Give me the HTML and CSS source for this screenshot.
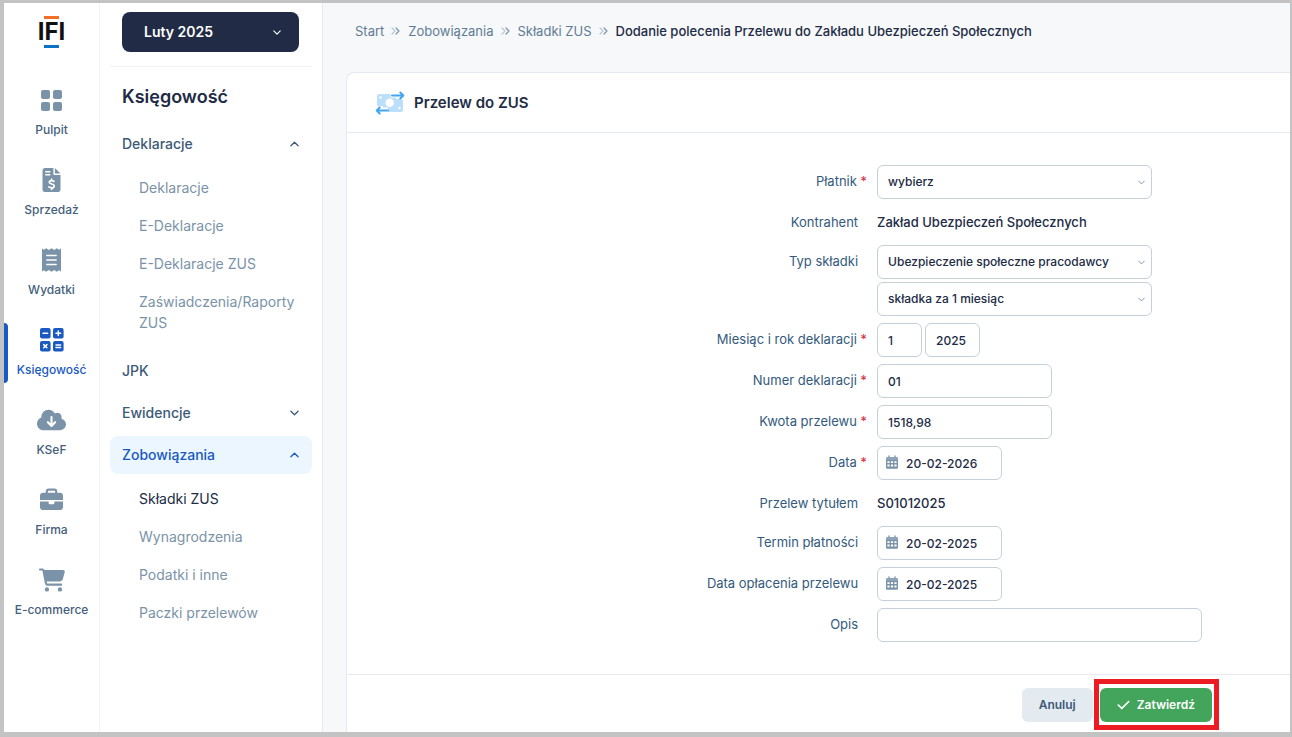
FILE: index.html
```html
<!DOCTYPE html>
<html lang="pl">
<head>
    <meta charset="UTF-8">
    <meta name="viewport" content="width=device-width, initial-scale=1.0">
    <title>Przelew do ZUS</title>
    <link rel="stylesheet" href="styles.css">
</head>
<body>
    <!-- shared icons -->
    <svg class="sprite" aria-hidden="true">
        <symbol id="chevron-down" viewBox="0 0 10 6">
            <path d="M1 1l4 4 4-4" fill="none" stroke="currentColor" stroke-width="1.4" stroke-linecap="round" stroke-linejoin="round"/>
        </symbol>
        <symbol id="chevron-up" viewBox="0 0 10 6">
            <path d="M1 5l4-4 4 4" fill="none" stroke="currentColor" stroke-width="1.4" stroke-linecap="round" stroke-linejoin="round"/>
        </symbol>
        <symbol id="double-right" viewBox="0 0 10 8">
            <path d="M1 1l3 3-3 3" fill="none" stroke="#b9c6d2" stroke-width="1.2" stroke-linecap="round" stroke-linejoin="round"/>
            <path d="M5 1l3 3-3 3" fill="none" stroke="#7b93a8" stroke-width="1.2" stroke-linecap="round" stroke-linejoin="round"/>
        </symbol>
        <symbol id="calendar" viewBox="0 0 12 14">
            <path d="M3 0.3a.8.8 0 0 1 .8.8V2h4.4v-.9a.8.8 0 0 1 1.6 0V2h.9A1.3 1.3 0 0 1 12 3.3V5H0V3.3A1.3 1.3 0 0 1 1.3 2h.9v-.9A.8.8 0 0 1 3 .3z" fill="#8ea3b5"/>
            <path fill="#7b93a8" fill-rule="evenodd" d="M0 5h12v7.4a1.3 1.3 0 0 1-1.3 1.3H1.3A1.3 1.3 0 0 1 0 12.4zM1.4 6.2v1.9h2.2V6.2zm3.5 0v1.9h2.2V6.2zm3.5 0v1.9h2.2V6.2zM1.4 9.6v2h2.2v-2zm3.5 0v2h2.2v-2zm3.5 0v2h2.2v-2z"/>
        </symbol>
    </svg>

    <nav class="rail" aria-label="Moduły">
        <a href="#" class="logo">IFI</a>
        <a href="#" class="rail-item">
            <svg width="23" height="24" viewBox="0 0 23 24" fill="currentColor">
                <rect x="1" y="2" width="9" height="9" rx="2"/>
                <rect x="13" y="2" width="9" height="9" rx="2"/>
                <rect x="1" y="14" width="9" height="9" rx="2"/>
                <rect x="13" y="14" width="9" height="9" rx="2"/>
            </svg>
            <span>Pulpit</span>
        </a>
        <a href="#" class="rail-item">
            <svg width="19" height="24" viewBox="0 0 384 512" fill="currentColor">
                <path d="M56 0C25 0 0 25 0 56v400c0 31 25 56 56 56h272c31 0 56-25 56-56V150H262c-17 0-30-13-30-30V0zM264 0v118h120z"/>
                <path d="M70 80h84M70 144h84" stroke="#fff" stroke-width="32" stroke-linecap="round"/>
                <path d="M246 284c-14-10-32-16-52-16-30 0-50 14-50 36 0 50 106 26 106 78 0 26-24 42-56 42-22 0-42-8-58-20M194 238v30M194 424v30" fill="none" stroke="#fff" stroke-width="36" stroke-linecap="round"/>
            </svg>
            <span>Sprzedaż</span>
        </a>
        <a href="#" class="rail-item">
            <svg width="19" height="24" viewBox="0 0 19 24" fill="currentColor">
                <path d="M0 .5l2 1.3L4.2.3l2.6 1.6L9.5.3l2.7 1.6L14.8.3 17 1.8l2-1.3v23l-2-1.3-2.2 1.5-2.6-1.6-2.7 1.6-2.7-1.6-2.6 1.6L2 22.2l-2 1.3z"/>
                <path d="M4.8 7.5h9.4M4.8 12h9.4M4.8 16.5h9.4" stroke="#fff" stroke-width="1.4" stroke-linecap="round"/>
            </svg>
            <span>Wydatki</span>
        </a>
        <a href="#" class="rail-item active">
            <svg width="24" height="24" viewBox="0 0 24 24" fill="currentColor">
                <rect width="10.6" height="10.4" rx="2"/>
                <rect x="13" width="10.6" height="10.4" rx="2"/>
                <rect y="13" width="10.6" height="10.4" rx="2"/>
                <rect x="13" y="13" width="10.6" height="10.4" rx="2"/>
                <path d="M3 5.2h4.6M16 5.2h4.6M18.3 2.9v4.6M3.7 16.6l3.2 3.2M6.9 16.6l-3.2 3.2M16 17h4.6M16 19.6h4.6" stroke="#fff" stroke-width="1.500" stroke-linecap="round"/>
            </svg>
            <span>Księgowość</span>
        </a>
        <a href="#" class="rail-item">
            <svg width="29" height="24" viewBox="0 0 640 512" fill="currentColor">
                <path d="M144 480C64.500 480 0 415.500 0 336c0-62.800 40.200-116.200 96.200-135.900c-.1-2.700-.2-5.400-.2-8.100c0-88.400 71.600-160 160-160c59.300 0 111 32.200 138.700 80.200C409.900 102 428.300 96 448 96c53 0 96 43 96 96c0 12.200-2.300 23.800-6.400 34.600C596 238.400 640 290.100 640 352c0 70.700-57.300 128-128 128H144z"/>
                <path d="M320 190v190M240 304l80 84 80-84" fill="none" stroke="#fff" stroke-width="46" stroke-linecap="round" stroke-linejoin="round"/>
            </svg>
            <span>KSeF</span>
        </a>
        <a href="#" class="rail-item">
            <svg width="23" height="24" viewBox="0 0 512 512" fill="currentColor">
                <path d="M184 48H328c4.400 0 8 3.600 8 8V96H176V56c0-4.400 3.600-8 8-8zm-56 8V96H64C28.700 96 0 124.700 0 160v96H192 320 512V160c0-35.300-28.700-64-64-64H384V56c0-30.900-25.100-56-56-56H184c-30.900 0-56 25.100-56 56zM512 288H320v32c0 17.700-14.300 32-32 32H224c-17.700 0-32-14.300-32-32V288H0V416c0 35.300 28.700 64 64 64H448c35.300 0 64-28.700 64-64V288z"/>
            </svg>
            <span>Firma</span>
        </a>
        <a href="#" class="rail-item">
            <svg width="26" height="24" viewBox="0 0 576 512" fill="currentColor">
                <path d="M0 24C0 10.700 10.700 0 24 0H69.500c22 0 41.500 12.800 50.600 32h411c26.300 0 45.500 25 38.600 50.400l-41 152.300c-8.500 31.400-37 53.300-69.500 53.300H170.700l5.400 28.500c2.200 11.300 12.100 19.500 23.600 19.500H488c13.300 0 24 10.700 24 24s-10.700 24-24 24H199.700c-34.600 0-64.300-24.600-70.700-58.500L77.400 54.500c-.7-3.800-4-6.500-7.900-6.500H24C10.700 48 0 37.300 0 24zM128 464a48 48 0 1 1 96 0 48 48 0 1 1 -96 0zm336-48a48 48 0 1 1 0 96 48 48 0 1 1 0-96z"/>
            </svg>
            <span>E-commerce</span>
        </a>
    </nav>

    <aside class="sidebar">
        <div class="period-box">
            <button type="button" class="period">
                <span>Luty 2025</span>
                <svg width="8" height="5"><use href="#chevron-down"/></svg>
            </button>
        </div>
        <h2>Księgowość</h2>
        <nav class="menu" aria-label="Księgowość">
            <a href="#" class="menu-item">Deklaracje <svg width="9" height="6"><use href="#chevron-up"/></svg></a>
            <ul class="submenu">
                <li><a href="#">Deklaracje</a></li>
                <li><a href="#">E-Deklaracje</a></li>
                <li><a href="#">E-Deklaracje ZUS</a></li>
                <li><a href="#">Zaświadczenia/Raporty ZUS</a></li>
            </ul>
            <a href="#" class="menu-item">JPK</a>
            <a href="#" class="menu-item">Ewidencje <svg width="9" height="6"><use href="#chevron-down"/></svg></a>
            <a href="#" class="menu-item active">Zobowiązania <svg width="9" height="6"><use href="#chevron-up"/></svg></a>
            <ul class="submenu">
                <li><a href="#" class="current">Składki ZUS</a></li>
                <li><a href="#">Wynagrodzenia</a></li>
                <li><a href="#">Podatki i inne</a></li>
                <li><a href="#">Paczki przelewów</a></li>
            </ul>
        </nav>
    </aside>

    <main class="main">
        <div class="breadcrumbs">
            <a href="#">Start</a>
            <svg width="10" height="8"><use href="#double-right"/></svg>
            <a href="#">Zobowiązania</a>
            <svg width="10" height="8"><use href="#double-right"/></svg>
            <a href="#">Składki ZUS</a>
            <svg width="10" height="8"><use href="#double-right"/></svg>
            <span class="here">Dodanie polecenia Przelewu do Zakładu Ubezpieczeń Społecznych</span>
        </div>

        <form class="card">
            <div class="card-header">
                <svg width="30" height="24" viewBox="0 0 30 24">
                    <path fill="#bbdefb" d="M4 3h11.500v3.500H21V8h3l1-.5 3 2V19a2 2 0 0 1-2 2H13v-4.500H8V15H5l-1 1-2-2V5a2 2 0 0 1 2-2z"/>
                    <circle cx="14.700" cy="11.800" r="4.300" fill="#fff"/>
                    <circle cx="5.500" cy="6.500" r="1.200" fill="#fff"/>
                    <circle cx="24.500" cy="17" r="1.200" fill="#fff"/>
                    <path d="M17 4.500h11M25.300 1.500l3 3-3 3M13 19.500H2M4.700 16.500l-3 3 3 3" fill="none" stroke="#42a5f5" stroke-width="2" stroke-linecap="round" stroke-linejoin="round"/>
                </svg>
                <h1>Przelew do ZUS</h1>
            </div>

            <div class="fields">
                <div class="row">
                    <label for="platnik" class="required">Płatnik</label>
                    <div class="control select">
                        <select id="platnik"><option>wybierz</option></select>
                        <svg width="7" height="5"><use href="#chevron-down"/></svg>
                    </div>
                </div>
                <div class="row static">
                    <span class="label">Kontrahent</span>
                    <span class="value">Zakład Ubezpieczeń Społecznych</span>
                </div>
                <div class="row">
                    <label for="typ">Typ składki</label>
                    <div class="stack">
                        <div class="control select">
                            <select id="typ"><option>Ubezpieczenie społeczne pracodawcy</option></select>
                            <svg width="7" height="5"><use href="#chevron-down"/></svg>
                        </div>
                        <div class="control select">
                            <select aria-label="Okres składki"><option>składka za 1 miesiąc</option></select>
                            <svg width="7" height="5"><use href="#chevron-down"/></svg>
                        </div>
                    </div>
                </div>
                <div class="row">
                    <label for="miesiac" class="required">Miesiąc i rok deklaracji</label>
                    <div class="pair">
                        <input type="text" id="miesiac" class="month" value="1">
                        <input type="text" class="year" aria-label="Rok deklaracji" value="2025">
                    </div>
                </div>
                <div class="row">
                    <label for="numer" class="required">Numer deklaracji</label>
                    <input type="text" id="numer" class="medium" value="01">
                </div>
                <div class="row">
                    <label for="kwota" class="required">Kwota przelewu</label>
                    <input type="text" id="kwota" class="medium" value="1518,98">
                </div>
                <div class="row">
                    <label for="data" class="required">Data</label>
                    <div class="control date">
                        <svg width="12" height="14"><use href="#calendar"/></svg>
                        <input type="text" id="data" value="20-02-2026">
                    </div>
                </div>
                <div class="row static">
                    <span class="label">Przelew tytułem</span>
                    <span class="value">S01012025</span>
                </div>
                <div class="row">
                    <label for="termin">Termin płatności</label>
                    <div class="control date">
                        <svg width="12" height="14"><use href="#calendar"/></svg>
                        <input type="text" id="termin" value="20-02-2025">
                    </div>
                </div>
                <div class="row">
                    <label for="oplacenie">Data opłacenia przelewu</label>
                    <div class="control date">
                        <svg width="12" height="14"><use href="#calendar"/></svg>
                        <input type="text" id="oplacenie" value="20-02-2025">
                    </div>
                </div>
                <div class="row">
                    <label for="opis">Opis</label>
                    <input type="text" id="opis" class="wide">
                </div>
            </div>

            <div class="card-footer">
                <button type="button" class="btn btn-cancel">Anuluj</button>
                <div class="highlight">
                    <button type="submit" class="btn btn-submit">
                        <svg width="13" height="14" viewBox="0 0 448 512" fill="currentColor">
                            <path d="M438.600 105.400c12.500 12.500 12.500 32.800 0 45.300l-256 256c-12.500 12.500-32.800 12.500-45.300 0l-128-128c-12.500-12.500-12.500-32.800 0-45.300s32.800-12.500 45.300 0L160 338.700 393.400 105.400c12.500-12.500 32.800-12.500 45.300 0z"/>
                        </svg>
                        Zatwierdź
                    </button>
                </div>
            </div>
        </form>
    </main>
</body>
</html>
```
FILE: styles.css
```css
* {
    margin: 0;
    padding: 0;
    box-sizing: border-box;
}

body {
    font-family: Inter, 'Open Sans', sans-serif;
    font-size: 13px;
    line-height: 20px;
    color: #212b45;
    background: #f7f8fa;
    min-height: 100vh;
    display: flex;
    border: solid #c3c3c3;
    border-width: 3px 2px 5px 4px;
}

a {
    color: inherit;
    text-decoration: none;
}

ul {
    list-style: none;
}

input,
select,
button {
    font: inherit;
    color: inherit;
}

svg {
    flex-shrink: 0;
}

.sprite {
    display: none;
}

/* left icon rail */
.rail {
    width: 96px;
    flex-shrink: 0;
    background: #fff;
    border-right: 1px solid #f1f3f6;
    display: flex;
    flex-direction: column;
    align-items: center;
    gap: 20px;
    padding-top: 13px;
}

.logo {
    font-size: 24px;
    line-height: 26px;
    font-weight: 700;
    color: #111;
    display: flex;
    flex-direction: column;
    align-items: center;
    margin-bottom: 15px;
}

.logo::before,
.logo::after {
    content: "";
    width: 15px;
    height: 3px;
    background: #f36f27;
}

.logo::after {
    background: #0b72c4;
}

.rail-item {
    width: 100%;
    height: 60px;
    padding-top: 5px;
    display: flex;
    flex-direction: column;
    align-items: center;
    gap: 8px;
    font-size: 12px;
    font-weight: 500;
    color: #44607c;
    position: relative;
}

.rail-item svg {
    color: #7b93a8;
}

.rail-item.active,
.rail-item.active svg {
    color: #1959c1;
}

.rail-item.active::before {
    content: "";
    position: absolute;
    left: 0;
    top: 0;
    width: 4px;
    height: 100%;
    background: #1959c1;
    border-radius: 0 4px 4px 0;
}

/* module menu */
.sidebar {
    width: 223px;
    flex-shrink: 0;
    background: #fff;
    border-right: 1px solid #e4e8f0;
    padding: 0 10px;
}

.period-box {
    padding: 9px 13px 14px 12px;
    border-bottom: 1px solid #f3f4f7;
}

.period {
    width: 100%;
    height: 40px;
    padding: 0 18px 0 22px;
    display: flex;
    align-items: center;
    justify-content: space-between;
    background: #212b45;
    color: #fff;
    border: none;
    border-radius: 8px;
    font-size: 14px;
    font-weight: 600;
}

.sidebar h2 {
    font-size: 18px;
    line-height: 24px;
    font-weight: 600;
    padding: 18px 12px 16px;
}

.menu {
    display: flex;
    flex-direction: column;
    gap: 4px;
}

.menu-item {
    height: 38px;
    padding: 0 13px 0 12px;
    display: flex;
    align-items: center;
    justify-content: space-between;
    font-size: 14px;
    font-weight: 500;
    color: #3c5a78;
    border-radius: 8px;
}

.menu-item.active {
    background: #ebf6ff;
    color: #1959c1;
}

.submenu {
    padding: 2px 0 6px 29px;
}

.submenu a {
    display: block;
    padding: 8px 0 9px;
    font-size: 14px;
    line-height: 21px;
    color: #7b93a8;
}

.submenu a.current {
    color: #212b45;
}

/* content */
.main {
    flex: 1;
    min-width: 0;
    padding-left: 23px;
    display: flex;
    flex-direction: column;
}

.breadcrumbs {
    display: flex;
    align-items: center;
    gap: 7px;
    padding: 18px 9px 31px;
    color: #5f7c95;
}

.breadcrumbs .here {
    font-weight: 500;
    color: #212b45;
}

.card {
    flex: 1;
    background: #fff;
    border: solid #e6e9f1;
    border-width: 1px 0 0 1px;
    border-radius: 8px 0 0 0;
}

.card-header {
    display: flex;
    align-items: center;
    gap: 9px;
    height: 60px;
    padding: 0 28px;
    border-bottom: 1px solid #e6e9f1;
}

.card-header h1 {
    font-size: 15px;
    font-weight: 600;
}

.fields {
    padding: 32px 20px;
    display: flex;
    flex-direction: column;
    gap: 7px;
}

.row {
    display: grid;
    grid-template-columns: 56fr 44fr;
    column-gap: 10px;
}

.row label,
.label {
    padding-right: 9px;
    line-height: 32px;
    text-align: right;
    color: #335a7d;
}

.row .required {
    padding-right: 0;
}

.required::after {
    content: " *";
    font-weight: 500;
    color: #dc3545;
}

.value {
    font-weight: 500;
    line-height: 32px;
}

.row input,
.row select {
    height: 34px;
    padding: 0 10px;
    font-size: 12px;
    font-weight: 500;
    background: #fff;
    border: 1px solid #c6d0da;
    border-radius: 6px;
    appearance: none;
}

.stack {
    display: flex;
    flex-direction: column;
    gap: 3px;
}

.pair {
    display: flex;
    gap: 3px;
}

.control {
    position: relative;
    display: flex;
}

.control input,
.control select {
    width: 100%;
}

.select {
    width: 275px;
}

.select svg {
    position: absolute;
    right: 7px;
    top: 15px;
    color: #7b93a8;
}

.date {
    width: 125px;
}

.date svg {
    position: absolute;
    left: 9px;
    top: 9px;
}

.row .date input {
    padding-left: 28px;
}

.month {
    width: 45px;
}

.year {
    width: 55px;
}

.medium {
    width: 175px;
}

.wide {
    width: 325px;
}

.card-footer {
    display: flex;
    justify-content: flex-end;
    gap: 7px;
    padding: 13px 78px 10px 20px;
    border-top: 1px solid #e6e9f1;
}

.btn {
    height: 34px;
    padding: 0 17px;
    display: flex;
    align-items: center;
    gap: 7px;
    border: none;
    border-radius: 6px;
    font-size: 12px;
    font-weight: 600;
    cursor: pointer;
}

.btn-cancel {
    background: #e3eaf0;
    color: #3c5a78;
}

.btn-submit {
    background: #43a55c;
    color: #fff;
}

/* red frame around the confirm button */
.highlight {
    position: relative;
}

.highlight::after {
    content: "";
    position: absolute;
    inset: -9px -7px -8px -6px;
    border: 5px solid #ed1c24;
    pointer-events: none;
}
```
